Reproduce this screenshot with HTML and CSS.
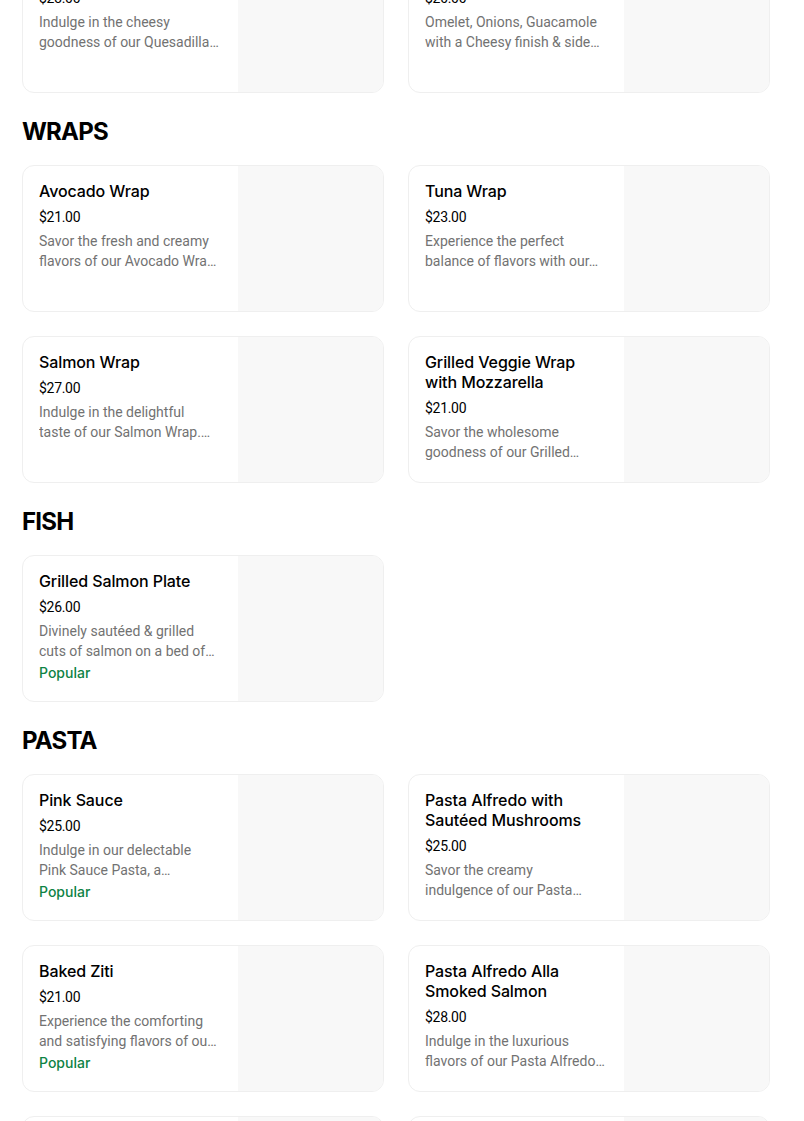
FILE: index.html
```html
<!DOCTYPE html>
<html lang="en">
<head>
<meta charset="utf-8">
<title>Menu</title>
<link rel="stylesheet" href="styles.css">
</head>
<body>
<main class="menu">
  <section class="section section-first">
    <div class="grid">
      <div class="card">
        <div class="info">
          <div class="title">Chicken Quesadilla</div>
          <div class="price">$23.00</div>
          <div class="desc">Indulge in the cheesy<br>goodness of our Quesadilla…</div>
        </div>
        <div class="pic"></div>
      </div>
      <div class="card">
        <div class="info">
          <div class="title">Breakfast Burrito</div>
          <div class="price">$20.00</div>
          <div class="desc">Omelet, Onions, Guacamole<br>with a Cheesy finish &amp; side…</div>
        </div>
        <div class="pic"></div>
      </div>
    </div>
  </section>

  <section class="section">
    <h2 class="heading">WRAPS</h2>
    <div class="grid">
      <div class="card">
        <div class="info">
          <div class="title">Avocado Wrap</div>
          <div class="price">$21.00</div>
          <div class="desc">Savor the fresh and creamy<br>flavors of our Avocado Wra…</div>
        </div>
        <div class="pic"></div>
      </div>
      <div class="card">
        <div class="info">
          <div class="title">Tuna Wrap</div>
          <div class="price">$23.00</div>
          <div class="desc">Experience the perfect<br>balance of flavors with our…</div>
        </div>
        <div class="pic"></div>
      </div>
      <div class="card">
        <div class="info">
          <div class="title">Salmon Wrap</div>
          <div class="price">$27.00</div>
          <div class="desc">Indulge in the delightful<br>taste of our Salmon Wrap.…</div>
        </div>
        <div class="pic"></div>
      </div>
      <div class="card">
        <div class="info">
          <div class="title">Grilled Veggie Wrap with Mozzarella</div>
          <div class="price">$21.00</div>
          <div class="desc">Savor the wholesome<br>goodness of our Grilled…</div>
        </div>
        <div class="pic"></div>
      </div>
    </div>
  </section>

  <section class="section">
    <h2 class="heading">FISH</h2>
    <div class="grid">
      <div class="card">
        <div class="info">
          <div class="title">Grilled Salmon Plate</div>
          <div class="price">$26.00</div>
          <div class="desc">Divinely sautéed &amp; grilled<br>cuts of salmon on a bed of…</div>
          <div class="tag">Popular</div>
        </div>
        <div class="pic"></div>
      </div>
    </div>
  </section>

  <section class="section">
    <h2 class="heading">PASTA</h2>
    <div class="grid">
      <div class="card">
        <div class="info">
          <div class="title">Pink Sauce</div>
          <div class="price">$25.00</div>
          <div class="desc">Indulge in our delectable<br>Pink Sauce Pasta, a…</div>
          <div class="tag">Popular</div>
        </div>
        <div class="pic"></div>
      </div>
      <div class="card">
        <div class="info">
          <div class="title">Pasta Alfredo with Sautéed Mushrooms</div>
          <div class="price">$25.00</div>
          <div class="desc">Savor the creamy<br>indulgence of our Pasta…</div>
        </div>
        <div class="pic"></div>
      </div>
      <div class="card">
        <div class="info">
          <div class="title">Baked Ziti</div>
          <div class="price">$21.00</div>
          <div class="desc">Experience the comforting<br>and satisfying flavors of ou…</div>
          <div class="tag">Popular</div>
        </div>
        <div class="pic"></div>
      </div>
      <div class="card">
        <div class="info">
          <div class="title">Pasta Alfredo Alla Smoked Salmon</div>
          <div class="price">$28.00</div>
          <div class="desc">Indulge in the luxurious<br>flavors of our Pasta Alfredo…</div>
        </div>
        <div class="pic"></div>
      </div>
      <div class="card">
        <div class="info"></div>
        <div class="pic"></div>
      </div>
      <div class="card">
        <div class="info"></div>
        <div class="pic"></div>
      </div>
    </div>
  </section>
</main>
</body>
</html>
```

FILE: styles.css
```css
* {
  box-sizing: border-box;
}

html, body {
  margin: 0;
  padding: 0;
  background: #ffffff;
}

body {
  font-family: Inter, "Noto Sans", "Liberation Sans", sans-serif;
  color: #000000;
  overflow: hidden;
}

.menu {
  width: 748px;
  margin-left: 22px;
}

.section-first {
  margin-top: -54px;
}

.heading {
  margin: 23px 0 17px 0;
  font-size: 24px;
  line-height: 32px;
  font-weight: 700;
  letter-spacing: -0.8px;
}

.grid {
  display: grid;
  grid-template-columns: 1fr 1fr;
  column-gap: 24px;
  row-gap: 24px;
}

.card {
  display: flex;
  height: 147px;
  border: 1px solid #efefef;
  border-radius: 12px;
  overflow: hidden;
  background: #ffffff;
}

.info {
  width: 215px;
  flex: none;
  padding: 15px 12px 0 16px;
}

.pic {
  flex: 1;
  background: #f8f8f8;
}

.title {
  margin-right: 6px;
  font-size: 16px;
  line-height: 20px;
  font-weight: 500;
  letter-spacing: -0.1px;
  color: #000000;
}

.price {
  margin-top: 6px;
  font-family: Roboto, "Liberation Sans", sans-serif;
  font-size: 14px;
  line-height: 20px;
  color: #000000;
  letter-spacing: -0.3px;
}

.desc {
  margin-top: 4px;
  font-family: Roboto, "Liberation Sans", sans-serif;
  font-size: 14px;
  line-height: 20px;
  color: #727272;
  letter-spacing: 0;
  white-space: nowrap;
  overflow: hidden;
}

.tag {
  margin-top: 2px;
  font-size: 14px;
  line-height: 20px;
  font-weight: 500;
  color: #0e8345;
}
```
